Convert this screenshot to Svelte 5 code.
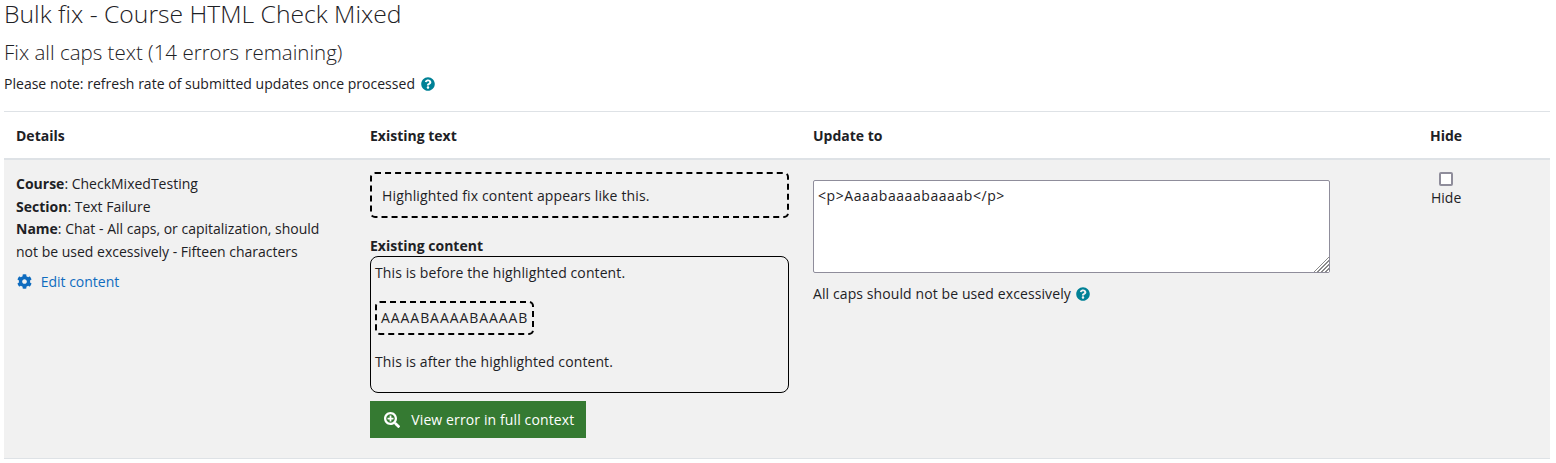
<script>
    const rows = [
        {
            course: 'CheckMixedTesting',
            section: 'Text Failure',
            name: 'Chat - All caps, or capitalization, should not be used excessively - Fifteen characters',
            fix: 'Highlighted fix content appears like this.',
            before: 'This is before the highlighted content.',
            highlighted: 'AAAABAAAABAAAAB',
            after: 'This is after the highlighted content.',
            update: '<p>Aaaabaaaabaaaab</p>'
        }
    ];
</script>

<div class="page">
    <h1>Bulk fix - Course HTML Check Mixed</h1>
    <h2>Fix all caps text (14 errors remaining)</h2>
    <p class="note">
        Please note: refresh rate of submitted updates once processed
        <svg class="help" viewBox="0 0 512 512"><path d="M504 256c0 136.997-111.043 248-248 248S8 392.997 8 256C8 119.083 119.043 8 256 8s248 111.083 248 248zM262.655 90c-54.497 0-89.255 22.957-116.549 63.758-3.536 5.286-2.353 12.415 2.715 16.258l34.699 26.31c5.205 3.947 12.621 3.008 16.665-2.122 17.864-22.658 30.113-35.797 57.303-35.797 20.429 0 45.698 13.148 45.698 32.958 0 14.976-12.363 22.667-32.534 33.976C247.128 238.528 216 254.941 216 296v4c0 6.627 5.373 12 12 12h56c6.627 0 12-5.373 12-12v-1.333c0-28.462 83.186-29.647 83.186-106.667 0-58.002-60.165-102-116.531-102zM256 338c-25.365 0-46 20.635-46 46 0 25.364 20.635 46 46 46s46-20.636 46-46c0-25.365-20.635-46-46-46z"/></svg>
    </p>

    <table>
        <thead>
            <tr>
                <th class="c1">Details</th>
                <th class="c2">Existing text</th>
                <th class="c3">Update to</th>
                <th class="c4">Hide</th>
            </tr>
        </thead>
        <tbody>
            {#each rows as row}
                <tr>
                    <td class="c1">
                        <div><b>Course</b>: {row.course}</div>
                        <div><b>Section</b>: {row.section}</div>
                        <div><b>Name</b>: {row.name}</div>
                        <a class="edit" href="#edit">
                            <svg viewBox="0 0 512 512"><path d="M487.4 315.7l-42.6-24.6c4.3-23.2 4.3-47 0-70.2l42.6-24.6c4.9-2.8 7.1-8.6 5.5-14-11.1-35.6-30-67.8-54.7-94.6-3.8-4.1-10-5.1-14.8-2.3L380.8 110c-17.9-15.4-38.5-27.3-60.8-35.1V25.8c0-5.6-3.9-10.5-9.4-11.7-36.7-8.2-74.3-7.8-109.2 0-5.5 1.2-9.4 6.1-9.4 11.7V75c-22.2 7.9-42.8 19.8-60.8 35.1L88.7 85.5c-4.9-2.8-11-1.9-14.8 2.3-24.7 26.7-43.6 58.9-54.7 94.6-1.7 5.4.6 11.2 5.5 14L67.3 221c-4.3 23.2-4.3 47 0 70.2l-42.6 24.6c-4.9 2.8-7.1 8.6-5.5 14 11.1 35.6 30 67.8 54.7 94.6 3.8 4.1 10 5.1 14.8 2.3l42.6-24.6c17.9 15.4 38.5 27.3 60.8 35.1v49.2c0 5.6 3.9 10.5 9.4 11.7 36.7 8.2 74.3 7.8 109.2 0 5.5-1.2 9.4-6.1 9.4-11.7v-49.2c22.2-7.9 42.8-19.8 60.8-35.1l42.6 24.6c4.9 2.8 11 1.9 14.8-2.3 24.7-26.7 43.6-58.9 54.7-94.6 1.5-5.5-.7-11.3-5.6-14.1zM256 336c-44.1 0-80-35.9-80-80s35.9-80 80-80 80 35.9 80 80-35.9 80-80 80z"/></svg>
                            Edit content
                        </a>
                    </td>
                    <td class="c2">
                        <div class="fix">{row.fix}</div>
                        <div class="label">Existing content</div>
                        <div class="existing">
                            <p>{row.before}</p>
                            <p><span class="mark">{row.highlighted}</span></p>
                            <p>{row.after}</p>
                        </div>
                        <button class="view">
                            <svg viewBox="0 0 512 512"><path d="M304 192v32c0 6.6-5.4 12-12 12h-56v56c0 6.6-5.4 12-12 12h-32c-6.6 0-12-5.4-12-12v-56h-56c-6.6 0-12-5.4-12-12v-32c0-6.6 5.4-12 12-12h56v-56c0-6.6 5.4-12 12-12h32c6.6 0 12 5.4 12 12v56h56c6.6 0 12 5.4 12 12zm201 284.7L476.7 505c-9.4 9.4-24.6 9.4-33.9 0L343 405.3c-4.5-4.5-7-10.6-7-17V372c-35.3 27.6-79.7 44-128 44C93.1 416 0 322.9 0 208S93.1 0 208 0s208 93.1 208 208c0 48.3-16.4 92.7-44 128h16.3c6.4 0 12.5 2.5 17 7l99.7 99.7c9.3 9.4 9.3 24.6 0 34zM344 208c0-75.2-60.8-136-136-136S72 132.8 72 208s60.8 136 136 136 136-60.8 136-136z"/></svg>
                            View error in full context
                        </button>
                    </td>
                    <td class="c3">
                        <textarea value={row.update}></textarea>
                        <div class="caps">
                            All caps should not be used excessively
                            <svg class="help" viewBox="0 0 512 512"><path d="M504 256c0 136.997-111.043 248-248 248S8 392.997 8 256C8 119.083 119.043 8 256 8s248 111.083 248 248zM262.655 90c-54.497 0-89.255 22.957-116.549 63.758-3.536 5.286-2.353 12.415 2.715 16.258l34.699 26.31c5.205 3.947 12.621 3.008 16.665-2.122 17.864-22.658 30.113-35.797 57.303-35.797 20.429 0 45.698 13.148 45.698 32.958 0 14.976-12.363 22.667-32.534 33.976C247.128 238.528 216 254.941 216 296v4c0 6.627 5.373 12 12 12h56c6.627 0 12-5.373 12-12v-1.333c0-28.462 83.186-29.647 83.186-106.667 0-58.002-60.165-102-116.531-102zM256 338c-25.365 0-46 20.635-46 46 0 25.364 20.635 46 46 46s46-20.636 46-46c0-25.365-20.635-46-46-46z"/></svg>
                        </div>
                    </td>
                    <td class="c4">
                        <label class="hide">
                            <input type="checkbox" />
                            <span>Hide</span>
                        </label>
                    </td>
                </tr>
            {/each}
        </tbody>
    </table>
</div>

<style>
    :global(body) {
        background: #fff;
    }

    .page {
        padding: 0 6px 0 4px;
        font-family: "Open Sans", "Noto Sans", sans-serif;
        font-size: 14px;
        line-height: 22.5px;
        color: #1d2125;
    }

    h1 {
        margin: 0;
        font-size: 24.7px;
        font-weight: 300;
        line-height: 27px;
    }

    h2 {
        margin: 11px 0 0;
        font-size: 20.5px;
        font-weight: 300;
        line-height: 29px;
    }

    .note {
        margin: 6px 0 0;
        height: 38px;
        letter-spacing: 0.02px;
    }

    .help {
        width: 14px;
        height: 14px;
        margin-left: 2px;
        vertical-align: -2px;
        fill: #008196;
    }

    table {
        width: 100%;
        table-layout: fixed;
        border-collapse: separate;
        border-spacing: 0;
        border-top: 1px solid #dee2e6;
    }

    th {
        padding: 13px 12px 10.5px;
        text-align: left;
        font-weight: 700;
        border-bottom: 2px solid #dee2e6;
    }

    td {
        padding: 12px 12px 20px;
        vertical-align: top;
        background: #f1f1f1;
        border-bottom: 1px solid #dee2e6;
    }

    .c1 {
        width: 354px;
        box-sizing: border-box;
    }

    .c2 {
        width: 443px;
        box-sizing: border-box;
    }

    .c3 {
        width: 617px;
        box-sizing: border-box;
    }

    td.c1 {
        padding-top: 13px;
        padding-right: 24px;
    }

    .edit {
        display: block;
        margin-top: 8px;
        color: #0f6cbf;
        text-decoration: none;
    }

    .edit svg {
        width: 15px;
        height: 15px;
        margin: 0 5px 0 1px;
        vertical-align: -2px;
        fill: #0f6cbf;
    }

    .fix {
        padding: 10.5px 10px 9px;
        border: 2px dashed #000;
        border-radius: 5px;
        letter-spacing: 0.15px;
    }

    .label {
        margin-top: 17px;
        font-weight: 700;
        line-height: 21px;
    }

    .existing {
        height: 137px;
        box-sizing: border-box;
        padding: 5px 4px 4px;
        border: 1px solid #000;
        border-radius: 8px;
        letter-spacing: 0.1px;
    }

    .existing p {
        margin: 0 0 16px;
    }

    .mark {
        display: inline-block;
        padding: 4px;
        border: 2px dashed #000;
        border-radius: 5px;
        letter-spacing: 0.93px;
    }

    .view {
        display: block;
        height: 37px;
        margin-top: 8px;
        padding: 2px 12px 0 13.5px;
        border: 0;
        background: #357a32;
        color: #fff;
        font: inherit;
        letter-spacing: 0.12px;
    }

    .view svg {
        width: 16px;
        height: 16px;
        margin-right: 8px;
        vertical-align: -3px;
        fill: #fff;
    }

    td.c3 {
        padding-top: 20px;
    }

    textarea {
        display: block;
        width: 517px;
        height: 93px;
        box-sizing: border-box;
        padding: 4px;
        border: 1px solid #8f8d9b;
        border-radius: 2px;
        font: inherit;
        letter-spacing: 0.57px;
        color: #1d2125;
        background: #fff;
    }

    textarea::-webkit-resizer {
        background:
            linear-gradient(135deg, #fff 50%, transparent 50%),
            repeating-linear-gradient(135deg, #fff 0 1.5px, #8a8a8a 1.5px 2.8px);
    }

    .caps {
        margin-top: 10px;
        letter-spacing: 0.1px;
    }

    .caps .help {
        margin-left: 1px;
    }

    td.c4 {
        padding-left: 13px;
    }

    .hide {
        display: flex;
        width: fit-content;
        flex-direction: column;
        align-items: center;
    }

    input[type="checkbox"] {
        appearance: none;
        width: 14px;
        height: 14px;
        margin: 0 0 1px;
        border: 2px solid #8f8d9b;
        border-radius: 2px;
        background: #fff;
    }
</style>
